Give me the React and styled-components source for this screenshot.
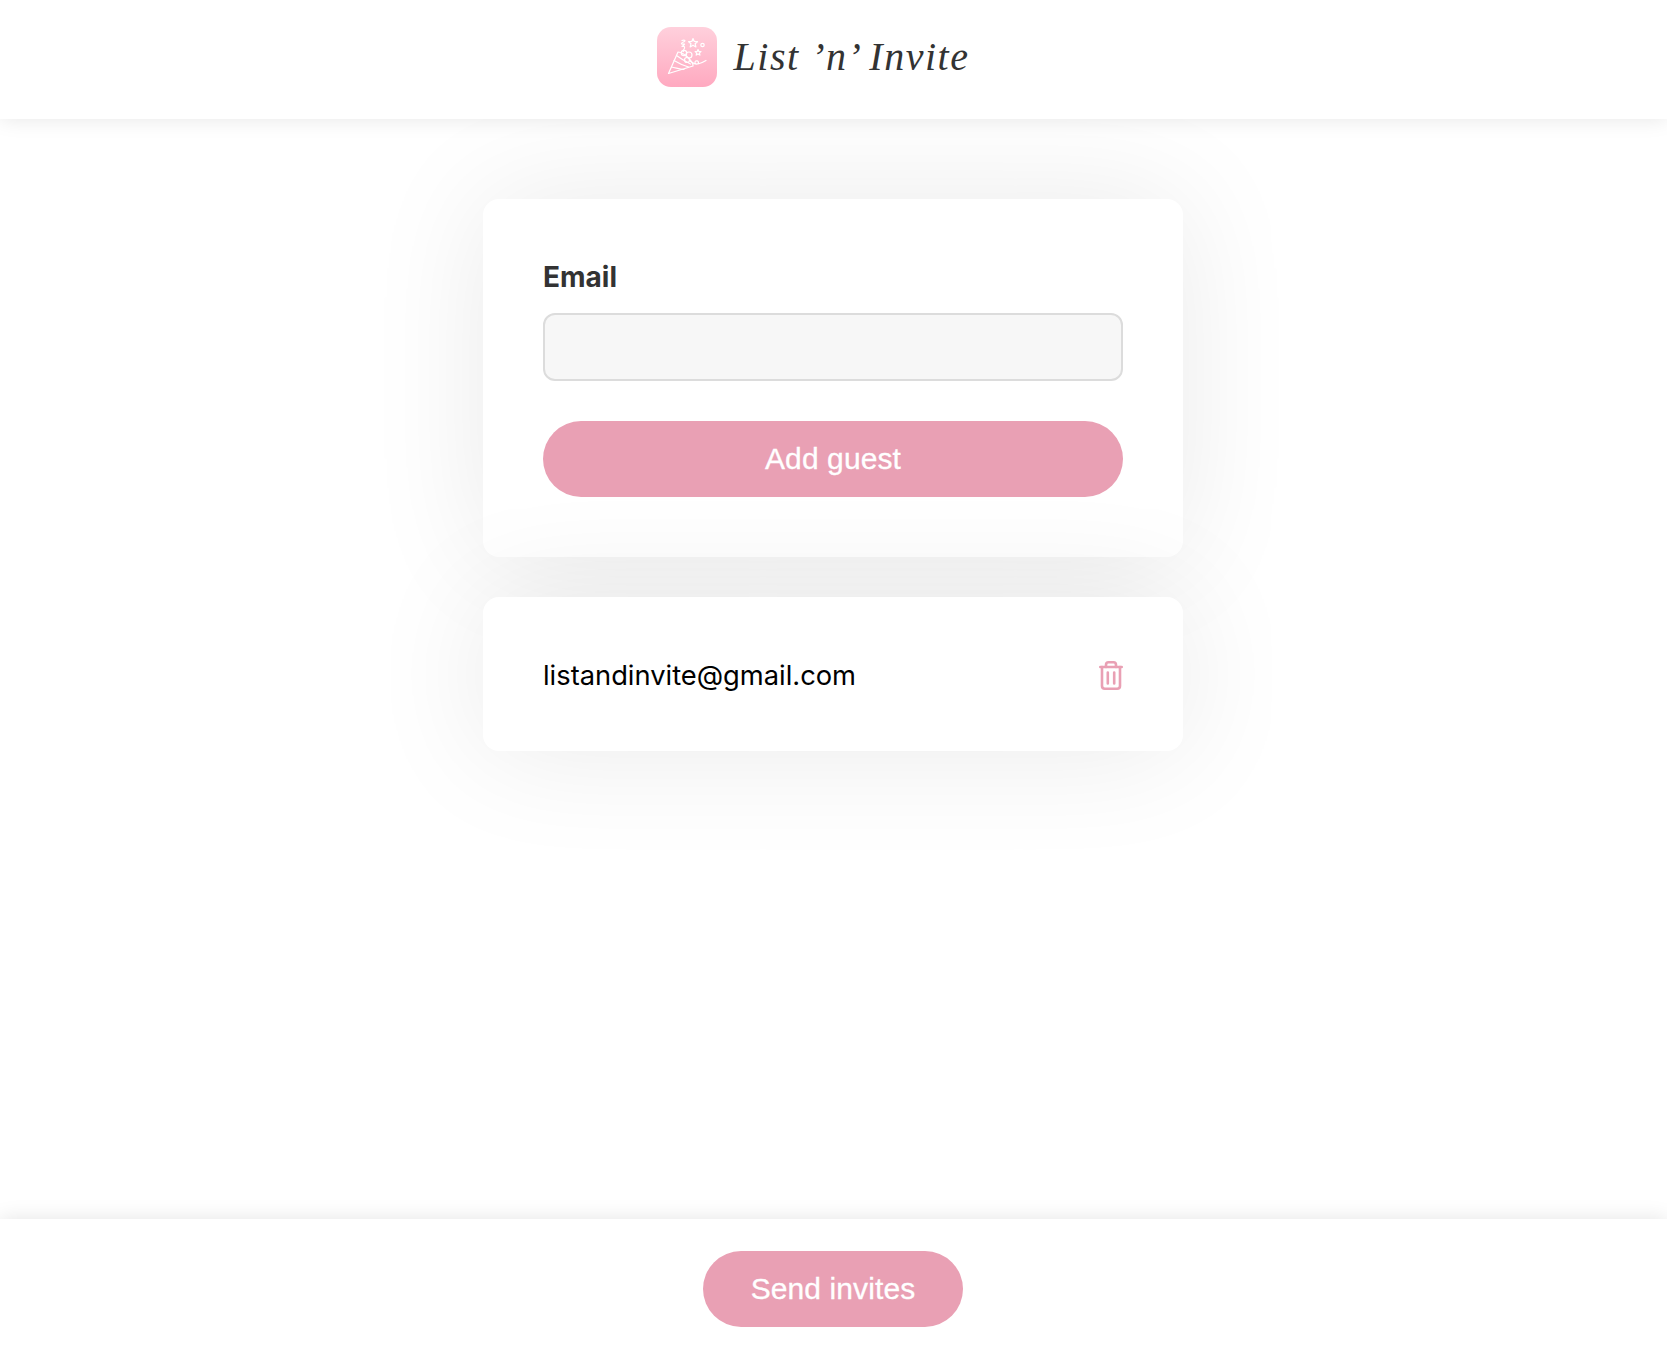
import React from "react";
import styled, { createGlobalStyle } from "styled-components";

const Global = createGlobalStyle`
  html, body { margin: 0; padding: 0; background: #fff; }
  * { box-sizing: border-box; }
`;
const Page = styled.div`
  min-height: 100vh;
  display: flex;
  flex-direction: column;
  font-family: "Liberation Sans", Arial, sans-serif;
  overflow: hidden;
`;
const Header = styled.header`
  position: relative;
  z-index: 2;
  height: 119px;
  background: #fff;
  box-shadow: 0 0 20px rgba(0, 0, 0, 0.1);
  display: flex;
  align-items: flex-start;
  justify-content: center;
  padding: 27px 41px 0 0;
  gap: 17px;
`;
const LogoIcon = styled.div`
  width: 60px;
  height: 60px;
  border-radius: 14px;
  background: linear-gradient(180deg, #ffd0dc 0%, #ffa9c0 100%);
`;
const LogoText = styled.div`
  font-family: "Liberation Serif", serif;
  font-style: italic;
  font-size: 40px;
  line-height: 60px;
  letter-spacing: 1.5px;
  color: #333;
`;
const Main = styled.main`
  flex: 1;
  display: flex;
  flex-direction: column;
  align-items: center;
  padding: 80px 1px 0 0;
  gap: 40px;
`;
const Card = styled.section`
  width: 700px;
  background: #fff;
  border-radius: 16px;
  box-shadow: 0 0 120px rgba(0, 0, 0, 0.085);
`;
const FormCard = styled(Card)`
  height: 358px;
  padding: 60px;
  display: flex;
  flex-direction: column;
`;
const Label = styled.label`
  font-family: Inter, sans-serif;
  font-weight: 700;
  font-size: 28px;
  line-height: 34px;
  color: #333;
  margin: 1px 0 19px;
`;
const Input = styled.input`
  height: 68px;
  width: 100%;
  background: #f7f7f7;
  border: 2px solid #dcdcdc;
  border-radius: 12px;
  outline: none;
  margin-bottom: 40px;
`;
const Button = styled.button`
  height: 76px;
  border: none;
  border-radius: 38px;
  background: #e9a0b4;
  color: #fff;
  font-family: "Liberation Sans", Arial, sans-serif;
  font-size: 30px;
  letter-spacing: 0.1px;
  -webkit-text-stroke: 0.3px #fff;
  width: ${(p) => p.$width};
`;
const GuestCard = styled(Card)`
  height: 154px;
  padding: 3px 60px 0;
  display: flex;
  align-items: center;
  justify-content: space-between;
`;
const GuestEmail = styled.span`
  font-family: Inter, sans-serif;
  font-size: 27.300px;
  color: #000;
`;
const Footer = styled.footer`
  position: relative;
  z-index: 2;
  height: 129px;
  background: #fff;
  box-shadow: 0 0 20px rgba(0, 0, 0, 0.11);
  display: flex;
  justify-content: center;
  padding: 32px 1px 0 0;
`;

const Popper = () => (
  <svg width="60" height="60" viewBox="0 0 60 60" fill="none" stroke="#fff" strokeWidth="1.2" strokeLinecap="round" strokeLinejoin="round">
    <path d="M11.5 46.5L21 25c3 0 8 3 11 6.5s4.500 5.500 4 7.500Z" />
    <path d="M14.500 40c5 1 9 2.500 12.500 2.500M17 33.500c5 3 9 5 14.500 6.500M19.500 28.500c4 3 8 5.500 14 8.500" />
    <circle cx="27" cy="26" r="2.700" />
    <circle cx="32" cy="28" r="3" />
    <circle cx="30" cy="33" r="2.500" />
    <path d="M33 34c3 2 6 5 8 2.500s-3-4-3-1 6 1 11-2" />
    <path d="M25 13.500c3-1 4 .5 1.500 1.500s-3 2.500 0 2-1.500 2.500-1.500 2.500 3-1 2.500 1.500-2.500 2.500-1 3.500" />
    <path d="M36 11.500l1.300 3 3.200.2-2.400 2 .8 3.200-2.900-1.700-2.800 1.700.8-3.200-2.400-2 3.200-.2Z" />
    <path d="M41 22.500l.9 1.900 2.100.2-1.600 1.400.5 2.100-1.900-1.100-1.800 1.100.5-2.100-1.600-1.400 2.100-.2Z" />
    <circle cx="45.500" cy="18" r="1.700" />
  </svg>
);

const Trash = () => (
  <svg width="24" height="29" viewBox="0 0 24 29" fill="none" stroke="#e9a0b4" strokeWidth="2.600" strokeLinecap="round" strokeLinejoin="round">
    <path d="M1.300 6h21.400" />
    <path d="M7 6V4C7 2.200 8.200 1.300 9.500 1.300h5C15.800 1.300 17 2.200 17 4v2" />
    <path d="M3 6v19c0 1.700 1.100 2.700 2.800 2.700h12.400c1.700 0 2.800-1 2.800-2.700V6" />
    <path d="M8.800 11.500v11M15.200 11.500v11" />
  </svg>
);

export default function App() {
  return (
    <Page>
      <Global />
      <Header>
        <LogoIcon><Popper /></LogoIcon>
        <LogoText>List ’n’ Invite</LogoText>
      </Header>
      <Main>
        <FormCard>
          <Label>Email</Label>
          <Input type="email" />
          <Button $width="100%">Add guest</Button>
        </FormCard>
        <GuestCard>
          <GuestEmail>listandinvite@gmail.com</GuestEmail>
          <Trash />
        </GuestCard>
      </Main>
      <Footer>
        <Button $width="260px">Send invites</Button>
      </Footer>
    </Page>
  );
}
